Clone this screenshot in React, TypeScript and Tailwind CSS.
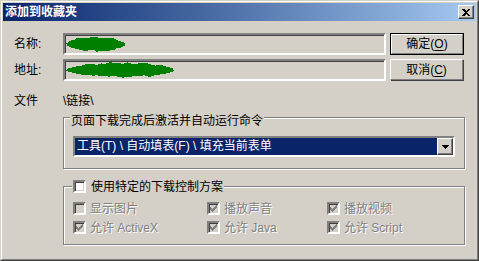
import React from 'react';

const sunken =
  'border-2 border-t-[#808080] border-l-[#808080] border-r-white border-b-white shadow-[inset_1px_1px_0_#404040,inset_-1px_-1px_0_#d4d0c8]';
const raised =
  'border border-t-white border-l-white border-r-[#404040] border-b-[#404040] shadow-[inset_-1px_-1px_0_#808080]';
const etched = 'border border-[#808080] shadow-[inset_1px_1px_0_#fff,1px_1px_0_#fff]';
const disabledText = 'text-[#808080] [text-shadow:1px_1px_0_#fff]';

const checkRows: [number, number, number][] = [
  [6, 0, 1],
  [5, 1, 2],
  [0, 2, 1],
  [4, 2, 3],
  [0, 3, 2],
  [3, 3, 3],
  [0, 4, 5],
  [1, 5, 3],
  [2, 6, 1],
];

function CheckBox({ checked, disabled }: { checked?: boolean; disabled?: boolean }) {
  return (
    <div
      className={`w-[13px] h-[13px] shrink-0 flex items-center justify-center ${sunken} ${
        disabled ? 'bg-[#d4d0c8]' : 'bg-white'
      }`}
    >
      {checked && (
        <svg width="7" height="7" viewBox="0 0 7 7" shapeRendering="crispEdges">
          {checkRows.map(([x, y, w], i) => (
            <rect key={i} x={x} y={y} width={w} height={1} fill={disabled ? '#808080' : '#000'} />
          ))}
        </svg>
      )}
    </div>
  );
}

function Option({ label, checked }: { label: string; checked?: boolean }) {
  return (
    <div className="flex items-center gap-[4px] h-[13px]">
      <CheckBox checked={checked} disabled />
      <span className={`leading-[14px] ${disabledText}`}>{label}</span>
    </div>
  );
}

// rough marker scribble used to hide the name / url
function Scribble({ width, seed }: { width: number; seed: number }) {
  let s = seed;
  const rand = () => {
    s = (s * 9301 + 49297) % 233280;
    return s / 233280;
  };
  const cx = width / 2;
  const cy = 9;
  const pts: string[] = [];
  const n = Math.round(width / 1.5);
  for (let i = 0; i < n; i++) {
    const a = (i / n) * Math.PI * 2;
    const rx = cx - 1 - rand() * 2.5;
    const ry = 8 - rand() * 2.5;
    pts.push(`${(cx + Math.cos(a) * rx).toFixed(1)},${(cy + Math.sin(a) * ry).toFixed(1)}`);
  }
  return (
    <svg width={width} height="18" viewBox={`0 0 ${width} 18`} className="shrink-0" shapeRendering="crispEdges">
      <polygon points={pts.join(' ')} fill="#008000" />
    </svg>
  );
}

function Field({ scribble, seed }: { scribble: number; seed: number }) {
  return (
    <div className={`w-[323px] h-[22px] bg-[#d4d0c8] flex items-center ${sunken}`}>
      <Scribble width={scribble} seed={seed} />
    </div>
  );
}

function Button({ label, hotkey, isDefault }: { label: string; hotkey: string; isDefault?: boolean }) {
  return (
    <div
      className={`w-[74px] h-[22px] flex ${
        isDefault ? 'border border-black shadow-[inset_-1px_-1px_0_#404040]' : 'pr-px pb-px'
      }`}
    >
      <div
        className={`flex-1 flex items-center justify-center border border-t-white border-l-white border-r-[#808080] border-b-[#808080] ${
          isDefault ? '' : 'shadow-[1px_1px_0_#404040]'
        }`}
      >
        {label}(<span className="underline underline-offset-2">{hotkey}</span>)
      </div>
    </div>
  );
}

export default function App() {
  return (
    <div className="w-[479px] h-[261px] bg-[#d4d0c8] border border-t-[#d4d0c8] border-l-[#d4d0c8] border-r-[#404040] border-b-[#404040] text-[12px] text-black [font-family:'Liberation_Sans','Noto_Sans_CJK_SC',sans-serif]">
      <div className="h-full border border-t-white border-l-white border-r-[#808080] border-b-[#808080] p-px flex flex-col">
        {/* title bar */}
        <div className="h-[18px] shrink-0 flex items-center justify-between pl-[2px] pr-[2px] bg-linear-to-r from-[#0a246a] to-[#a6caf0]">
          <span className="text-white font-bold leading-[14px]">添加到收藏夹</span>
          <div className={`w-[16px] h-[14px] bg-[#d4d0c8] flex items-center justify-center ${raised}`}>
            <svg width="8" height="7" viewBox="0 0 8 7" shapeRendering="crispEdges">
              <path d="M0 0h2l2 2 2-2h2L5 3.5 8 7H6L4 5 2 7H0l3-3.5z" fill="#000" />
            </svg>
          </div>
        </div>

        <div className="flex-1 flex flex-col pl-[11px]">
          {/* name / address + buttons */}
          <div className="flex mt-[12px]">
            <div className="flex flex-col gap-[4px]">
              <div className="flex items-center">
                <span className="w-[49px]">名称:</span>
                <Field scribble={62} seed={7} />
              </div>
              <div className="flex items-center">
                <span className="w-[49px]">地址:</span>
                <Field scribble={111} seed={31} />
              </div>
            </div>
            <div className="flex flex-col gap-[4px] ml-[4px]">
              <Button label="确定" hotkey="O" isDefault />
              <Button label="取消" hotkey="C" />
            </div>
          </div>

          {/* folder */}
          <div className="flex mt-[13px] leading-[14px]">
            <span className="w-[49px]">文件</span>
            <span>\链接\</span>
          </div>

          {/* command group */}
          <div className={`relative ml-[49px] mt-[9px] w-[402px] h-[52px] pt-[18px] pl-[9px] ${etched}`}>
            <div className="absolute left-[6px] top-[-4px] px-px bg-[#d4d0c8] leading-[14px]">
              页面下载完成后激活并自动运行命令
            </div>
            <div className={`w-[382px] h-[21px] bg-white flex ${sunken}`}>
              <div className="flex-1 bg-[#0a246a] text-white leading-[17px] pl-[2px] whitespace-pre overflow-hidden">
                工具(T) \ 自动填表(F) \ 填充当前表单
              </div>
              <div className={`w-[16px] h-[17px] bg-[#d4d0c8] flex items-center justify-center ${raised}`}>
                <svg width="7" height="4" viewBox="0 0 7 4" shapeRendering="crispEdges">
                  <path d="M0 0h7v1H6v1H5v1H4v1H3V3H2V2H1V1H0z" fill="#000" />
                </svg>
              </div>
            </div>
          </div>

          {/* download control group */}
          <div className={`relative ml-[49px] mt-[17px] w-[402px] h-[59px] pt-[15px] pl-[9px] ${etched}`}>
            <div className="absolute left-[8px] top-[-7px] px-px bg-[#d4d0c8] flex items-center gap-[5px] h-[13px]">
              <CheckBox />
              <span className="leading-[14px]">使用特定的下载控制方案</span>
            </div>
            <div className="grid grid-cols-[134px_120px_1fr] gap-y-[6px]">
              <Option label="显示图片" />
              <Option label="播放声音" checked />
              <Option label="播放视频" checked />
              <Option label="允许 ActiveX" checked />
              <Option label="允许 Java" checked />
              <Option label="允许 Script" checked />
            </div>
          </div>
        </div>
      </div>
    </div>
  );
}
